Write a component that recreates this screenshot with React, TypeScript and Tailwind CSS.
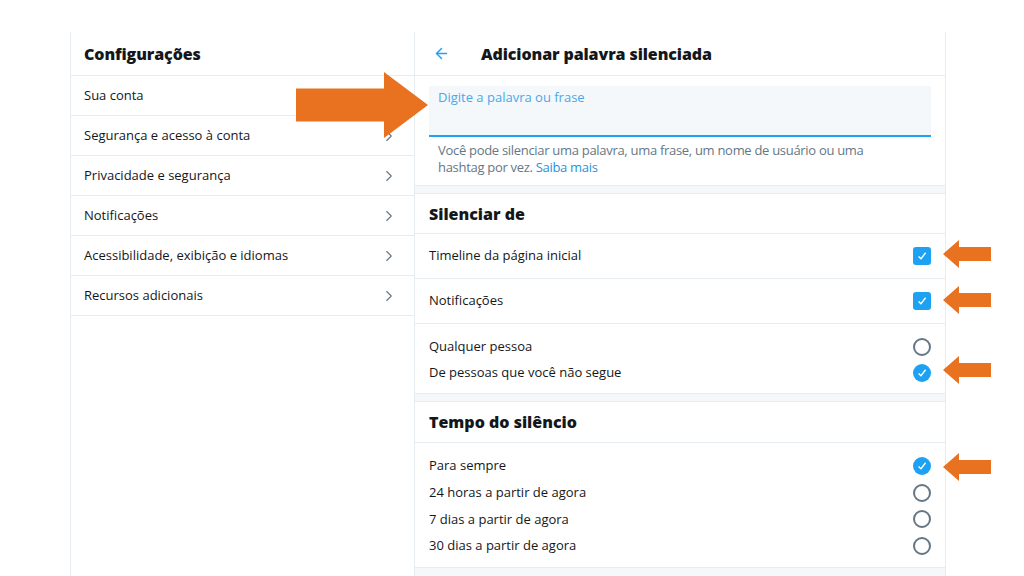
import { ChevronRight, ArrowLeft } from 'lucide-react';

const MENU = [
  { label: 'Sua conta', chevron: false },
  { label: 'Segurança e acesso à conta', chevron: true },
  { label: 'Privacidade e segurança', chevron: true },
  { label: 'Notificações', chevron: true },
  { label: 'Acessibilidade, exibição e idiomas', chevron: true },
  { label: 'Recursos adicionais', chevron: true },
];

const DURATIONS = [
  { label: 'Para sempre', on: true },
  { label: '24 horas a partir de agora', on: false },
  { label: '7 dias a partir de agora', on: false },
  { label: '30 dias a partir de agora', on: false },
];

function Tick() {
  return (
    <svg viewBox="0 0 12 12" className="h-[12px] w-[12px]" fill="none" stroke="white" strokeWidth="1.4">
      <path d="M2.6 6.4 L5 8.8 L9.6 2.8" />
    </svg>
  );
}

function Checkbox() {
  return (
    <span className="flex h-[18px] w-[18px] items-center justify-center rounded-[3px] bg-[#1da1f2]">
      <Tick />
    </span>
  );
}

function Radio({ on }: { on: boolean }) {
  if (on) {
    return (
      <span className="flex h-[18px] w-[18px] items-center justify-center rounded-full bg-[#1da1f2]">
        <Tick />
      </span>
    );
  }
  return <span className="block h-[18px] w-[18px] rounded-full border-2 border-[#657786]" />;
}

// orange annotation arrow, drawn pointing left unless flipped
function Pointer({ className, flip }: { className: string; flip?: boolean }) {
  return (
    <svg viewBox="0 0 48 28" className={className} preserveAspectRatio="none" style={flip ? { transform: 'scaleX(-1)' } : undefined}>
      <path d="M0 14 L16 0 L16 7 L48 7 L48 21 L16 21 L16 28 Z" fill="#e8721f" />
    </svg>
  );
}

export default function App() {
  return (
    <div className="relative h-[576px] w-[1024px] overflow-hidden bg-white font-['Open_Sans',sans-serif] text-[#14171a]">
      <div className="flex pl-[70px] pt-[32px] h-full">
        {/* settings menu */}
        <div className="w-[345px] border-x border-[#e6ecf0] h-full">
          <div className="flex h-[44px] items-center border-b border-[#e6ecf0] px-[13px]">
            <h1 className="text-[16px] font-extrabold tracking-[-0.1px]">Configurações</h1>
          </div>
          {MENU.map((m) => (
            <div key={m.label} className="flex h-[40px] items-center justify-between border-b border-[#e6ecf0] pl-[13px] pr-[16px] text-[13px]">
              <span>{m.label}</span>
              {m.chevron && <ChevronRight className="h-[18px] w-[18px] text-[#657786]" strokeWidth={1.5} />}
            </div>
          ))}
        </div>

        {/* muted word form */}
        <div className="w-[531px] border-r border-[#e6ecf0] h-full">
          <div className="flex h-[44px] items-center border-b border-[#e6ecf0] pl-[18px]">
            <ArrowLeft className="h-[17px] w-[17px] text-[#1da1f2]" strokeWidth={2} />
            <h2 className="ml-[31px] text-[16px] font-extrabold tracking-[-0.1px]">Adicionar palavra silenciada</h2>
          </div>

          <div className="px-[14px] pt-[10px]">
            <div className="h-[51px] border-b-2 border-[#1da1f2] bg-[#f5f8fa] px-[9px] pt-[2px] text-[13px] text-[#4aa8e8]">
              Digite a palavra ou frase
            </div>
          </div>
          <p className="pl-[23px] pr-[40px] pt-[5px] pb-[9px] text-[13px] leading-[17px] tracking-[-0.3px] text-[#657786]">
            Você pode silenciar uma palavra, uma frase, um nome de usuário ou uma hashtag por vez.{' '}
            <span className="text-[#1b95e0]">Saiba mais</span>
          </p>

          <div className="h-[9px] bg-[#f5f8fa] border-y border-[#e6ecf0]" />

          <div className="flex h-[40px] items-center border-b border-[#e6ecf0] px-[14px]">
            <h3 className="text-[16px] font-extrabold">Silenciar de</h3>
          </div>
          <div className="flex h-[45px] items-center justify-between border-b border-[#e6ecf0] px-[14px] text-[13px]">
            <span>Timeline da página inicial</span>
            <Checkbox />
          </div>
          <div className="flex h-[45px] items-center justify-between border-b border-[#e6ecf0] px-[14px] text-[13px]">
            <span>Notificações</span>
            <Checkbox />
          </div>
          <div className="flex flex-col gap-[8px] px-[14px] pt-[14px] pb-[11px] text-[13px]">
            <div className="flex h-[18px] items-center justify-between">
              <span>Qualquer pessoa</span>
              <Radio on={false} />
            </div>
            <div className="flex h-[18px] items-center justify-between">
              <span>De pessoas que você não segue</span>
              <Radio on />
            </div>
          </div>

          <div className="h-[9px] bg-[#f5f8fa] border-y border-[#e6ecf0]" />

          <div className="flex h-[41px] items-center border-b border-[#e6ecf0] px-[14px]">
            <h3 className="text-[16px] font-extrabold">Tempo do silêncio</h3>
          </div>
          <div className="flex flex-col gap-[8.7px] px-[14px] pt-[14px] pb-[12px] text-[13px]">
            {DURATIONS.map((d) => (
              <div key={d.label} className="flex h-[18px] items-center justify-between">
                <span>{d.label}</span>
                <Radio on={d.on} />
              </div>
            ))}
          </div>
          <div className="h-[9px] bg-[#f5f8fa] border-t border-[#e6ecf0]" />
        </div>
      </div>

      {/* annotations */}
      <Pointer flip className="absolute left-[296px] top-[72px] h-[66px] w-[132px]" />
      <Pointer className="absolute left-[943px] top-[240px] h-[28px] w-[48px]" />
      <Pointer className="absolute left-[943px] top-[286px] h-[28px] w-[48px]" />
      <Pointer className="absolute left-[943px] top-[356px] h-[28px] w-[48px]" />
      <Pointer className="absolute left-[943px] top-[453px] h-[28px] w-[48px]" />
    </div>
  );
}
